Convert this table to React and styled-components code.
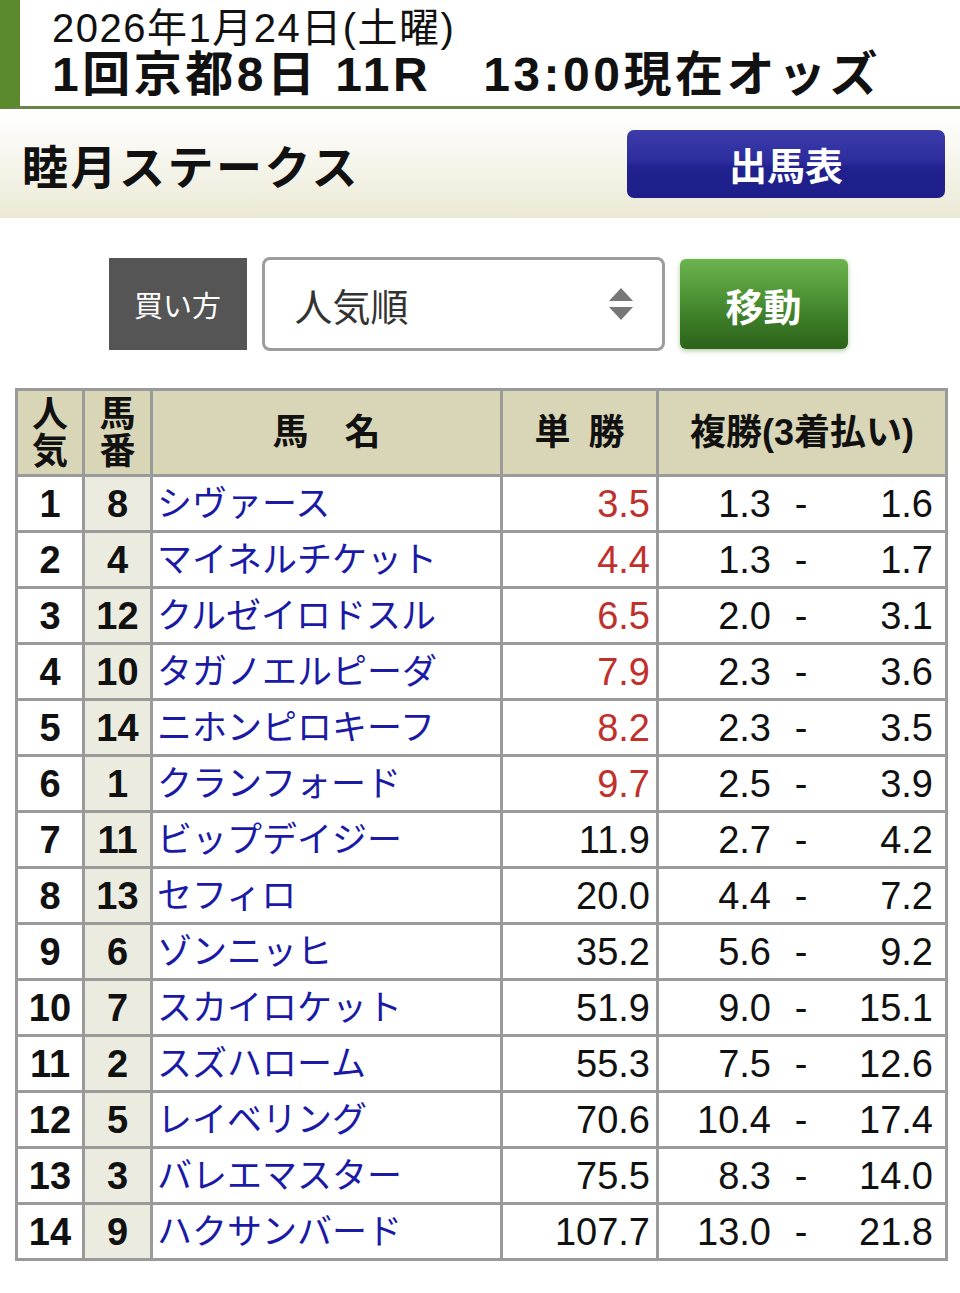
import React from 'react';
import styled, { createGlobalStyle } from 'styled-components';

const GlobalStyle = createGlobalStyle`
  body {
    margin: 0;
    background: #fff;
    font-family: "Liberation Sans", "Noto Sans CJK JP", sans-serif;
    color: #111;
  }
`;

const RaceHeader = styled.header`
  height: 109px;
  box-sizing: border-box;
  border-left: 20px solid #5b8a2d;
  border-bottom: 3px solid #6a8445;
  padding: 7px 0 0 32px;
`;
const DateLine = styled.div`
  font-size: 40px;
  letter-spacing: 1.5px;
  line-height: 42px;
`;
const RaceLine = styled.div`
  font-size: 48px;
  font-weight: bold;
  letter-spacing: 3.5px;
  line-height: 52px;
  span + span {
    margin-left: 52px;
  }
`;

const TitleBand = styled.div`
  display: flex;
  align-items: center;
  justify-content: space-between;
  height: 109px;
  padding: 0 15px 0 22px;
  background: linear-gradient(#ffffff 0%, #f7f6ee 45%, #ebe9d4 100%);
`;
const RaceName = styled.h1`
  margin: 0;
  font-size: 46px;
  font-weight: bold;
  letter-spacing: 2.5px;
`;
const CardButton = styled.button`
  width: 318px;
  height: 68px;
  border: none;
  border-radius: 7px;
  background: linear-gradient(#3b3baa 0%, #2d2d9e 45%, #21218f 55%, #1f1f8a 100%);
  color: #fff;
  font-family: inherit;
  font-size: 38px;
  font-weight: bold;
`;

const Controls = styled.div`
  display: flex;
  justify-content: center;
  align-items: center;
  gap: 15px;
  margin: 39px 0 0 -4px;
`;
const BuyLabel = styled.div`
  width: 138px;
  height: 92px;
  display: flex;
  align-items: center;
  justify-content: center;
  background: #555;
  color: #fff;
  font-size: 29px;
`;
const SelectBox = styled.div`
  width: 403px;
  height: 94px;
  box-sizing: border-box;
  border: 3px solid #9c9c9c;
  border-radius: 8px;
  display: flex;
  align-items: center;
  justify-content: space-between;
  padding: 0 28px 0 30px;
  font-size: 38px;
  color: #333;
`;
const GoButton = styled.button`
  width: 168px;
  height: 90px;
  border: none;
  border-radius: 6px;
  background: linear-gradient(#6cb44e 0%, #4f9436 40%, #3a7a26 70%, #2c6219 100%);
  box-shadow: 0 2px 5px rgba(80, 140, 60, 0.45);
  color: #fff;
  font-family: inherit;
  font-size: 38px;
  font-weight: bold;
`;

const OddsTable = styled.table`
  margin: 37px 15px 0;
  width: 930px;
  border-collapse: collapse;
  border: 3px solid #9a9a9a;
  table-layout: fixed;
`;
const HeadCell = styled.th`
  border: 3px solid #9a9a9a;
  background: #d9d6b8;
  height: 83px;
  padding: 0;
  font-size: 36px;
  font-weight: bold;
  line-height: 37px;
  text-align: center;
  white-space: pre;
`;
const Cell = styled.td`
  border: 3px solid #9a9a9a;
  height: 53px;
  padding: 0 ${p => (p.$pr ? p.$pr : 0)}px 0 ${p => (p.$pl ? p.$pl : 0)}px;
  font-size: 38px;
  font-weight: ${p => (p.$bold ? 'bold' : 'normal')};
  text-align: ${p => p.$align || 'center'};
  background: ${p => (p.$shade ? '#ecebdf' : '#fff')};
  color: ${p => p.$color || '#111'};
  line-height: 48px;
  white-space: nowrap;
`;
const HorseName = styled.span`
  color: #1a1aa6;
  font-size: 35px;
`;
const Place = styled.div`
  display: flex;
  align-items: center;
  span:first-child {
    width: 112px;
    text-align: right;
  }
  span:nth-child(2) {
    width: 60px;
    text-align: center;
  }
  span:last-child {
    flex: 1;
    text-align: right;
  }
`;

const horses = [
  [1, 8, 'シヴァース', '3.5', '1.3', '1.6'],
  [2, 4, 'マイネルチケット', '4.4', '1.3', '1.7'],
  [3, 12, 'クルゼイロドスル', '6.5', '2.0', '3.1'],
  [4, 10, 'タガノエルピーダ', '7.9', '2.3', '3.6'],
  [5, 14, 'ニホンピロキーフ', '8.2', '2.3', '3.5'],
  [6, 1, 'クランフォード', '9.7', '2.5', '3.9'],
  [7, 11, 'ビップデイジー', '11.9', '2.7', '4.2'],
  [8, 13, 'セフィロ', '20.0', '4.4', '7.2'],
  [9, 6, 'ゾンニッヒ', '35.2', '5.6', '9.2'],
  [10, 7, 'スカイロケット', '51.9', '9.0', '15.1'],
  [11, 2, 'スズハローム', '55.3', '7.5', '12.6'],
  [12, 5, 'レイベリング', '70.6', '10.4', '17.4'],
  [13, 3, 'バレエマスター', '75.5', '8.3', '14.0'],
  [14, 9, 'ハクサンバード', '107.7', '13.0', '21.8'],
];

function SortArrows() {
  return (
    <svg width="26" height="36" viewBox="0 0 26 36">
      <path d="M13 2 L25 15 L1 15 Z" fill="#777" />
      <path d="M13 34 L25 21 L1 21 Z" fill="#777" />
    </svg>
  );
}

export default function App() {
  return (
    <>
      <GlobalStyle />
      <RaceHeader>
        <DateLine>2026年1月24日(土曜)</DateLine>
        <RaceLine>
          <span>1回京都8日 11R</span>
          <span>13:00現在オッズ</span>
        </RaceLine>
      </RaceHeader>
      <TitleBand>
        <RaceName>睦月ステークス</RaceName>
        <CardButton>出馬表</CardButton>
      </TitleBand>
      <Controls>
        <BuyLabel>買い方</BuyLabel>
        <SelectBox>
          人気順
          <SortArrows />
        </SelectBox>
        <GoButton>移動</GoButton>
      </Controls>
      <OddsTable>
        <colgroup>
          <col style={{ width: 67 }} />
          <col style={{ width: 68 }} />
          <col style={{ width: 350 }} />
          <col style={{ width: 156 }} />
          <col style={{ width: 289 }} />
        </colgroup>
        <thead>
          <tr>
            <HeadCell>{'人\n気'}</HeadCell>
            <HeadCell>{'馬\n番'}</HeadCell>
            <HeadCell>馬　名</HeadCell>
            <HeadCell>{'単\u2002勝'}</HeadCell>
            <HeadCell>複勝(3着払い)</HeadCell>
          </tr>
        </thead>
        <tbody>
          {horses.map(([rank, num, name, win, lo, hi]) => (
            <tr key={rank}>
              <Cell $bold>{rank}</Cell>
              <Cell $bold $shade>{num}</Cell>
              <Cell $align="left" $pl={4}>
                <HorseName>{name}</HorseName>
              </Cell>
              <Cell $align="right" $pr={6} $color={rank <= 6 ? '#c0302c' : '#111'}>
                {win}
              </Cell>
              <Cell $pr={12}>
                <Place>
                  <span>{lo}</span>
                  <span>-</span>
                  <span>{hi}</span>
                </Place>
              </Cell>
            </tr>
          ))}
        </tbody>
      </OddsTable>
    </>
  );
}
